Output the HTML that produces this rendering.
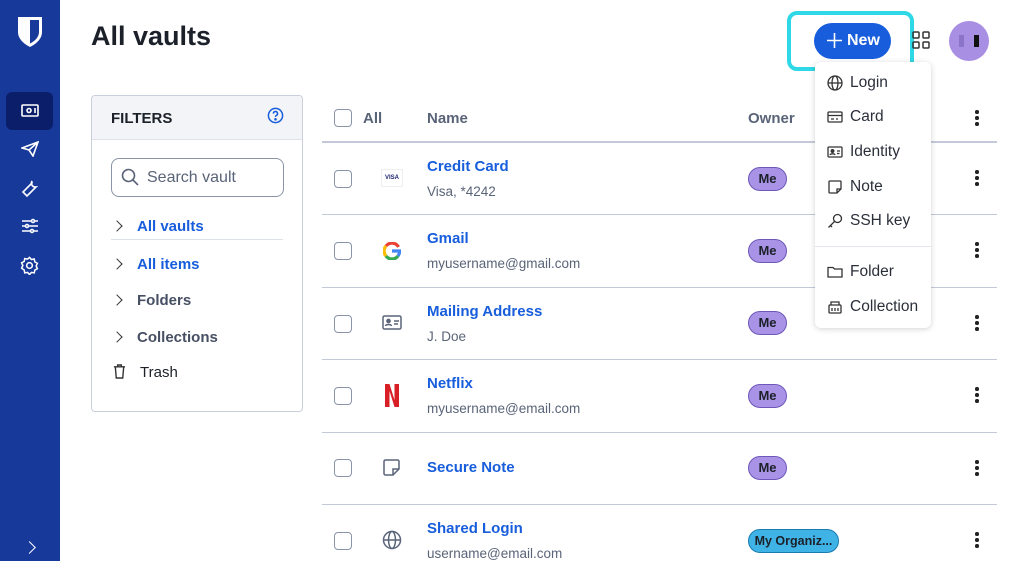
<!DOCTYPE html>
<html><head><meta charset="utf-8"><style>
*{box-sizing:border-box;margin:0;padding:0}
body{width:1024px;height:561px;overflow:hidden;background:#fff;font-family:"Liberation Sans",Arial,sans-serif;position:relative;color:#1b2029}
.abs{position:absolute}
.side{left:0;top:0;width:60px;height:561px;background:#17399a}
.title{left:91px;top:21px;font-size:27px;font-weight:bold;color:#1b2029}
.filters{left:91px;top:95px;width:212px;height:317px;border:1px solid #c9cfdb;border-radius:4px;overflow:hidden}
.fh{height:44px;background:#f2f4f7;border-bottom:1px solid #dde2ea;padding:14px 19px;font-weight:bold;font-size:15px}
.search{left:19px;top:62px;width:173px;height:39px;border:1px solid #8a94a8;border-radius:8px;font-size:16px;color:#5a6478;padding:10px 0 0 35px}
.fi{left:19px;font-size:15px;font-weight:bold;color:#464f63}
.fi.b{color:#175ddc}
.chev{display:inline-block;width:8px;height:8px;border-right:1.6px solid #333;border-bottom:1.6px solid #333;transform:rotate(-45deg);margin:0 16px 1px 2px}
.hl{left:0;width:675px;height:1px;background:#c3c9d8}
.cb{width:18px;height:18px;border:1.5px solid #8a94a8;border-radius:4px}
.name{font-size:15px;font-weight:bold;color:#175ddc}
.sub{font-size:13.5px;color:#5a6478}
.me{width:39px;height:24px;border-radius:12px;background:#a993e6;border:1px solid #6e57b8;font-size:13px;font-weight:bold;text-align:center;line-height:22px;color:#1b2029}
.dots{width:3px}
.dots i{display:block;width:3.5px;height:3.5px;background:#222;border-radius:50%;margin-bottom:2.5px}
.menu{left:815px;top:62px;width:116px;height:266px;background:#fff;border-radius:6px;box-shadow:0 1px 6px rgba(0,0,0,.18)}
.mi{left:12px;font-size:15.5px;color:#2a2f3a;display:flex;align-items:center;gap:7px}
.mi svg{width:16px;height:16px}
</style></head><body>
<div class="abs side">
 <svg class="abs" style="left:17px;top:16px" width="26" height="32" viewBox="0 0 26 32"><path d="M1 1h24v15c0 7-6 12-12 15C7 28 1 23 1 16z" fill="#fff"/><path d="M13 4h9v12c0 5-4 9-9 11.5z" fill="#17399a"/></svg>
 <div class="abs" style="left:6px;top:92px;width:47px;height:38px;background:#0b1e69;border-radius:6px"></div>
 <svg class="abs" style="left:21px;top:104px" width="18" height="14" viewBox="0 0 18 14" fill="none" stroke="#fff" stroke-width="1.6"><rect x="1" y="1" width="16" height="11" rx="1"/><circle cx="8" cy="6.5" r="2"/><path d="M14 4v5"/></svg>
 <svg class="abs" style="left:21px;top:141px" width="18" height="16" viewBox="0 0 18 16" fill="none" stroke="#fff" stroke-width="1.6"><path d="M1 7L17 1 12 15 8 9z M8 9l9-8"/></svg>
 <svg class="abs" style="left:21px;top:179px" width="18" height="18" viewBox="0 0 18 18" fill="none" stroke="#fff" stroke-width="1.6"><path d="M11 2a4 4 0 0 0 4 6l-9 9-4-4 9-9a4 4 0 0 1 0-2z"/></svg>
 <svg class="abs" style="left:21px;top:218px" width="18" height="16" viewBox="0 0 18 16" fill="none" stroke="#fff" stroke-width="1.6"><path d="M1 3h16M1 8h16M1 13h16"/><circle cx="12" cy="3" r="1.5" fill="#17399a"/><circle cx="6" cy="8" r="1.5" fill="#17399a"/><circle cx="11" cy="13" r="1.5" fill="#17399a"/></svg>
 <svg class="abs" style="left:20px;top:256px" width="19" height="19" viewBox="0 0 20 20" fill="none" stroke="#fff" stroke-width="1.6"><circle cx="10" cy="10" r="3"/><path d="M10 1.5l2 2.2 3-.5.6 3 2.7 1.5-1.3 2.8 1.3 2.8-2.7 1.5-.6 3-3-.5-2 2.2-2-2.2-3 .5-.6-3L1.7 12.8 3 10 1.7 7.2l2.7-1.5.6-3 3 .5z"/></svg>
 <div class="abs" style="left:25px;top:543px;width:9px;height:9px;border-right:1.8px solid #fff;border-bottom:1.8px solid #fff;transform:rotate(-45deg)"></div>
</div>
<div class="abs title">All vaults</div>

<div class="abs filters">
 <div class="fh">FILTERS</div>
 <svg class="abs" style="left:175px;top:11px" width="17" height="17" viewBox="0 0 18 18" fill="none" stroke="#175ddc" stroke-width="1.6"><circle cx="9" cy="9" r="7.5"/><path d="M6.8 7a2.2 2.2 0 1 1 3 2c-.6.3-.8.7-.8 1.4"/><circle cx="9" cy="13" r=".6" fill="#175ddc"/></svg>
 <div class="abs search">Search vault</div>
 <svg class="abs" style="left:29px;top:72px" width="18" height="18" viewBox="0 0 18 18" fill="none" stroke="#5a6478" stroke-width="1.6"><circle cx="7.5" cy="7.5" r="6"/><path d="M12 12l5 5"/></svg>
 <div class="abs fi b" style="top:122px"><span class="chev"></span>All vaults</div>
 <div class="abs" style="left:19px;top:143px;width:172px;height:1px;background:#dde2ea"></div>
 <div class="abs fi b" style="top:160px"><span class="chev"></span>All items</div>
 <div class="abs fi" style="top:196px"><span class="chev"></span>Folders</div>
 <div class="abs fi" style="top:233px"><span class="chev"></span>Collections</div>
 <div class="abs fi" style="top:268px;font-weight:normal;color:#1b2029"><svg width="13" height="15" viewBox="0 0 14 16" fill="none" stroke="#333" stroke-width="1.5" style="margin:0 14px -2px 2px"><path d="M1 3h12M5 3V1h4v2M2.5 3l1 12h7l1-12"/></svg>Trash</div>
</div>

<div class="abs" style="left:322px;top:0;width:675px;height:561px">
 <div class="abs cb" style="left:12px;top:109px"></div>
 <div class="abs" style="left:41px;top:110px;font-size:15px;font-weight:bold;color:#5a6478">All</div>
 <div class="abs" style="left:105px;top:110px;font-size:15px;font-weight:bold;color:#5a6478">Name</div>
 <div class="abs" style="left:426px;top:110px;font-size:15px;font-weight:bold;color:#5a6478">Owner</div>
 <div class="abs dots" style="left:653px;top:110px"><i></i><i></i><i></i></div>
 <div class="abs hl" style="top:141px;height:2px"></div>
 <div class="abs hl" style="top:214px"></div>
 <div class="abs hl" style="top:287px"></div>
 <div class="abs hl" style="top:359px"></div>
 <div class="abs hl" style="top:432px"></div>
 <div class="abs hl" style="top:504px"></div>

 <div class="abs cb" style="left:12px;top:170px"></div>
 <div class="abs" style="left:59px;top:169px;width:22px;height:18px;border:1px solid #eee;font-size:6px;font-weight:bold;color:#1a1f71;text-align:center;line-height:16px">VISA</div>
 <div class="abs name" style="left:105px;top:158px">Credit Card</div>
 <div class="abs sub" style="left:105px;top:184px">Visa, *4242</div>
 <div class="abs me" style="left:426px;top:167px">Me</div>
 <div class="abs dots" style="left:653px;top:170px"><i></i><i></i><i></i></div>

 <div class="abs cb" style="left:12px;top:242px"></div>
 <svg class="abs" style="left:61px;top:242px" width="18" height="18" viewBox="0 0 18 18" fill="none" stroke-width="3.2"><path d="M15.5 5A7.5 7.5 0 0 0 3 4" stroke="#ea4335"/><path d="M3 4a7.5 7.5 0 0 0 0 10" stroke="#fbbc05"/><path d="M3 14a7.5 7.5 0 0 0 12 0" stroke="#34a853"/><path d="M15 14a7.5 7.5 0 0 0 1.5-5H9" stroke="#4285f4"/></svg>
 <div class="abs name" style="left:105px;top:230px">Gmail</div>
 <div class="abs sub" style="left:105px;top:256px">myusername@gmail.com</div>
 <div class="abs me" style="left:426px;top:239px">Me</div>
 <div class="abs dots" style="left:653px;top:242px"><i></i><i></i><i></i></div>

 <div class="abs cb" style="left:12px;top:315px"></div>
 <svg class="abs" style="left:60px;top:315px" width="20" height="15" viewBox="0 0 20 15" fill="none" stroke="#5a6478" stroke-width="1.5"><rect x="1" y="1" width="18" height="13" rx="1.5"/><circle cx="6.5" cy="6" r="1.6" fill="#5a6478"/><path d="M3.5 11c.5-2 5.5-2 6 0M12 6h5M12 9h4"/></svg>
 <div class="abs name" style="left:105px;top:303px">Mailing Address</div>
 <div class="abs sub" style="left:105px;top:329px">J. Doe</div>
 <div class="abs me" style="left:426px;top:311px">Me</div>
 <div class="abs dots" style="left:653px;top:315px"><i></i><i></i><i></i></div>

 <div class="abs cb" style="left:12px;top:387px"></div>
 <svg class="abs" style="left:63px;top:384px" width="14" height="23" viewBox="0 0 14 23"><path d="M0 0h4.5l5 16V0H14v23H9.5L4.5 7v16H0z" fill="#d81f26"/></svg>
 <div class="abs name" style="left:105px;top:375px">Netflix</div>
 <div class="abs sub" style="left:105px;top:401px">myusername@email.com</div>
 <div class="abs me" style="left:426px;top:384px">Me</div>
 <div class="abs dots" style="left:653px;top:387px"><i></i><i></i><i></i></div>

 <div class="abs cb" style="left:12px;top:459px"></div>
 <svg class="abs" style="left:61px;top:459px" width="17" height="17" viewBox="0 0 17 17" fill="none" stroke="#5a6478" stroke-width="1.5"><path d="M1 2.5a1.5 1.5 0 0 1 1.5-1.5h12A1.5 1.5 0 0 1 16 2.5V10l-6 6H2.5A1.5 1.5 0 0 1 1 14.5zM10 16v-6h6"/></svg>
 <div class="abs name" style="left:105px;top:459px">Secure Note</div>
 <div class="abs me" style="left:426px;top:456px">Me</div>
 <div class="abs dots" style="left:653px;top:460px"><i></i><i></i><i></i></div>

 <div class="abs cb" style="left:12px;top:532px"></div>
 <svg class="abs" style="left:60px;top:530px" width="20" height="20" viewBox="0 0 20 20" fill="none" stroke="#5a6478" stroke-width="1.5"><circle cx="10" cy="10" r="8.5"/><ellipse cx="10" cy="10" rx="3.5" ry="8.5"/><path d="M1.5 10h17"/></svg>
 <div class="abs name" style="left:105px;top:520px">Shared Login</div>
 <div class="abs sub" style="left:105px;top:546px">username@email.com</div>
 <div class="abs me" style="left:426px;top:529px;width:91px;background:#3fb3e6;border-color:#1a7bb0;font-size:12.5px">My Organiz...</div>
 <div class="abs dots" style="left:653px;top:532px"><i></i><i></i><i></i></div>
</div>

<div class="abs" style="left:787px;top:11px;width:127px;height:60px;border:4px solid #2fd8e6;border-radius:10px"></div>
<div class="abs" style="left:814px;top:23px;width:77px;height:36px;border-radius:18px;background:#175ddc;color:#fff;font-weight:bold;font-size:16px;line-height:36px;padding-left:33px">New</div>
<svg class="abs" style="left:826px;top:32px" width="17" height="17" viewBox="0 0 17 17" stroke="#fff" stroke-width="1.6"><path d="M8.5 1v15M1 8.5h15"/></svg>
<svg class="abs" style="left:912px;top:31px" width="18" height="18" viewBox="0 0 18 18" fill="none" stroke="#333" stroke-width="1.5"><rect x="1" y="1" width="6" height="6" rx="1"/><rect x="11" y="1" width="6" height="6" rx="1"/><rect x="1" y="11" width="6" height="6" rx="1"/><rect x="11" y="11" width="6" height="6" rx="1"/></svg>
<div class="abs" style="left:949px;top:21px;width:40px;height:40px;border-radius:50%;background:#a88fe3"></div>
<div class="abs" style="left:959px;top:35px;width:5px;height:12px;background:#8a73c8"></div>
<div class="abs" style="left:974px;top:35px;width:5px;height:12px;background:#111"></div>

<div class="abs menu">
 <div class="abs mi" style="top:12px"><svg viewBox="0 0 16 16" fill="none" stroke="#333" stroke-width="1.3"><circle cx="8" cy="8" r="7"/><ellipse cx="8" cy="8" rx="3" ry="7"/><path d="M1 8h14"/></svg>Login</div>
 <div class="abs mi" style="top:46px"><svg viewBox="0 0 16 16" fill="none" stroke="#333" stroke-width="1.3"><rect x="1" y="3" width="14" height="10" rx="1"/><path d="M1 6.5h14M4 10h3M9 10h2"/></svg>Card</div>
 <div class="abs mi" style="top:81px"><svg viewBox="0 0 16 16" fill="none" stroke="#333" stroke-width="1.3"><rect x="1" y="3" width="14" height="10" rx="1"/><circle cx="5.5" cy="7" r="1.3" fill="#333"/><path d="M3 11c.4-1.6 4.6-1.6 5 0M10 7h3M10 9.5h2.5"/></svg>Identity</div>
 <div class="abs mi" style="top:116px"><svg viewBox="0 0 16 16" fill="none" stroke="#333" stroke-width="1.3"><path d="M2 3a1 1 0 0 1 1-1h10a1 1 0 0 1 1 1v7l-4 4H3a1 1 0 0 1-1-1zM10 14v-4h4"/></svg>Note</div>
 <div class="abs mi" style="top:150px"><svg viewBox="0 0 16 16" fill="none" stroke="#333" stroke-width="1.3"><circle cx="10.5" cy="5.5" r="4"/><path d="M7.5 8.5L1.5 14.5M3.5 12.5l1.5 1.5"/></svg>SSH key</div>
 <div class="abs" style="left:0;top:184px;width:116px;height:1px;background:#e3e6ec"></div>
 <div class="abs mi" style="top:201px"><svg viewBox="0 0 16 16" fill="none" stroke="#333" stroke-width="1.3"><path d="M1 3.5h5l1.5 1.5H15v8H1z"/></svg>Folder</div>
 <div class="abs mi" style="top:236px"><svg viewBox="0 0 16 16" fill="none" stroke="#333" stroke-width="1.3"><rect x="2" y="6" width="12" height="8" rx="1"/><path d="M4 6V3h8v3M5 9v3M8 9v3M11 9v3"/></svg>Collection</div>
</div>
</body></html>
